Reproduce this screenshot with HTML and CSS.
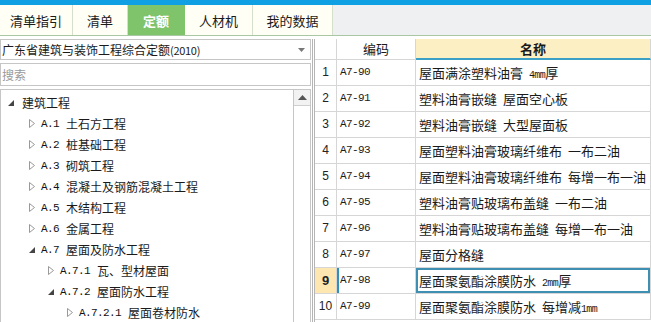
FILE: index.html
```html
<!DOCTYPE html>
<html lang="zh">
<head>
<meta charset="utf-8">
<link rel="stylesheet" href="styles.css">
</head>
<body>
<div class="topbar"></div>
<div class="tabs">
  <div class="tab t1">清单指引</div>
  <div class="tab t2">清单</div>
  <div class="tab t3 active">定额</div>
  <div class="tab t4">人材机</div>
  <div class="tab t5">我的数据</div>
</div>
<div class="main">
  <div class="left">
    <div class="dropdown">
      <span class="dd-text">广东省建筑与装饰工程综合定额<span class="yr">(2010)</span></span>
      <svg class="dd-arrow" width="7" height="4" viewBox="0 0 7 4"><path d="M0 0H7L3.5 4Z" fill="#777"/></svg>
    </div>
    <div class="search">搜索</div>
    <div class="tree">
      <div class="tree-list">
        <div class="node l0"><svg class="ic" width="8" height="8" viewBox="0 0 8 8"><path d="M7 1V7H1Z" fill="#444"/></svg><span class="lbl">建筑工程</span></div>
        <div class="node l1"><svg class="ic" width="8" height="9" viewBox="0 0 8 9"><path d="M1.5 0.5L6.5 4.5L1.5 8.5Z" fill="none" stroke="#999"/></svg><span class="code">A.1</span><span class="lbl">土石方工程</span></div>
        <div class="node l1"><svg class="ic" width="8" height="9" viewBox="0 0 8 9"><path d="M1.5 0.5L6.5 4.5L1.5 8.5Z" fill="none" stroke="#999"/></svg><span class="code">A.2</span><span class="lbl">桩基础工程</span></div>
        <div class="node l1"><svg class="ic" width="8" height="9" viewBox="0 0 8 9"><path d="M1.5 0.5L6.5 4.5L1.5 8.5Z" fill="none" stroke="#999"/></svg><span class="code">A.3</span><span class="lbl">砌筑工程</span></div>
        <div class="node l1"><svg class="ic" width="8" height="9" viewBox="0 0 8 9"><path d="M1.5 0.5L6.5 4.5L1.5 8.5Z" fill="none" stroke="#999"/></svg><span class="code">A.4</span><span class="lbl">混凝土及钢筋混凝土工程</span></div>
        <div class="node l1"><svg class="ic" width="8" height="9" viewBox="0 0 8 9"><path d="M1.5 0.5L6.5 4.5L1.5 8.5Z" fill="none" stroke="#999"/></svg><span class="code">A.5</span><span class="lbl">木结构工程</span></div>
        <div class="node l1"><svg class="ic" width="8" height="9" viewBox="0 0 8 9"><path d="M1.5 0.5L6.5 4.5L1.5 8.5Z" fill="none" stroke="#999"/></svg><span class="code">A.6</span><span class="lbl">金属工程</span></div>
        <div class="node l1"><svg class="ic" width="8" height="8" viewBox="0 0 8 8"><path d="M7 1V7H1Z" fill="#444"/></svg><span class="code">A.7</span><span class="lbl">屋面及防水工程</span></div>
        <div class="node l2"><svg class="ic" width="8" height="9" viewBox="0 0 8 9"><path d="M1.5 0.5L6.5 4.5L1.5 8.5Z" fill="none" stroke="#999"/></svg><span class="code">A.7.1</span><span class="lbl">瓦、型材屋面</span></div>
        <div class="node l2"><svg class="ic" width="8" height="8" viewBox="0 0 8 8"><path d="M7 1V7H1Z" fill="#444"/></svg><span class="code">A.7.2</span><span class="lbl">屋面防水工程</span></div>
        <div class="node l3"><svg class="ic" width="8" height="9" viewBox="0 0 8 9"><path d="M1.5 0.5L6.5 4.5L1.5 8.5Z" fill="none" stroke="#999"/></svg><span class="code">A.7.2.1</span><span class="lbl">屋面卷材防水</span></div>
      </div>
      <div class="vscroll">
        <div class="sb-btn"><svg width="9" height="5" viewBox="0 0 9 5"><path d="M0 5L4.5 0L9 5Z" fill="#555"/></svg></div>
      </div>
    </div>
  </div>
  <div class="right">
    <div class="grid">
      <div class="hd c-no"></div>
      <div class="hd c-code">编码</div>
      <div class="hd c-name">名称</div>

      <div class="c-no">1</div><div class="c-code">A7-90</div><div class="c-name">屋面满涂塑料油膏 <span class="lat">4mm</span>厚</div>
      <div class="c-no">2</div><div class="c-code">A7-91</div><div class="c-name">塑料油膏嵌缝 屋面空心板</div>
      <div class="c-no">3</div><div class="c-code">A7-92</div><div class="c-name">塑料油膏嵌缝 大型屋面板</div>
      <div class="c-no">4</div><div class="c-code">A7-93</div><div class="c-name">屋面塑料油膏玻璃纤维布 一布二油</div>
      <div class="c-no">5</div><div class="c-code">A7-94</div><div class="c-name">屋面塑料油膏玻璃纤维布 每增一布一油</div>
      <div class="c-no">6</div><div class="c-code">A7-95</div><div class="c-name">塑料油膏贴玻璃布盖缝 一布二油</div>
      <div class="c-no">7</div><div class="c-code">A7-96</div><div class="c-name">塑料油膏贴玻璃布盖缝 每增一布一油</div>
      <div class="c-no">8</div><div class="c-code">A7-97</div><div class="c-name">屋面分格缝</div>
      <div class="c-no sel-no">9</div><div class="c-code sel-code">A7-98</div><div class="c-name sel-name">屋面聚氨酯涂膜防水 <span class="lat">2mm</span>厚</div>
      <div class="c-no">10</div><div class="c-code">A7-99</div><div class="c-name">屋面聚氨酯涂膜防水 每增减<span class="lat">1mm</span></div>
    </div>
  </div>
</div>
</body>
</html>
```

FILE: styles.css
```css
* { box-sizing: border-box; }
html, body { margin: 0; padding: 0; }
body {
  width: 651px;
  height: 322px;
  overflow: hidden;
  background: #ffffff;
  font-family: "Noto Sans CJK SC", "Liberation Sans", sans-serif;
  font-size: 12px;
  color: #1a1a1a;
}
.topbar {
  height: 5px;
  background: #0f9fe3;
}
.tabs {
  display: flex;
  height: 31px;
  background: #eff0f2;
  border-bottom: 1px solid #a9c7a2;
}
.tab {
  display: flex;
  align-items: center;
  justify-content: center;
  background: #fffff6;
  border-right: 1px solid #d4e0cc;
  font-size: 13px;
  color: #1a1a1a;
}
.t1 { width: 73px; }
.t2 { width: 55px; }
.t3 { width: 57px; }
.t4 { width: 68px; }
.t5 { width: 80px; }
.tab.active {
  background: #7fc36b;
  color: #ffffff;
  font-weight: bold;
  border-right-color: #7fc36b;
}
.main {
  display: grid;
  grid-template-columns: 311px 1fr;
  column-gap: 1px;
  padding-top: 3px;
}
.left {
  display: flex;
  flex-direction: column;
  gap: 3px;
}
.dropdown {
  height: 21px;
  border: 1px solid #c6c6c6;
  display: flex;
  align-items: center;
  justify-content: space-between;
  padding: 0 5px 0 1px;
  font-size: 12px;
}
.yr { font-size: 11px; letter-spacing: -0.3px; }
.search {
  height: 23px;
  border: 1px solid #c6c6c6;
  display: flex;
  align-items: center;
  padding-left: 1px;
  color: #9a9a9a;
  font-size: 12px;
}
.tree {
  height: 240px;
  border: 1px solid #c6c6c6;
  display: flex;
}
.tree-list {
  flex: 1;
  padding-top: 2px;
}
.node {
  height: 21px;
  display: flex;
  align-items: center;
  white-space: nowrap;
  font-size: 12px;
}
.node .ic { flex: none; margin-right: 5px; }
.l0 { padding-left: 6px; }
.l1 { padding-left: 27px; }
.l2 { padding-left: 46px; }
.l3 { padding-left: 65px; }
.l0 .ic { margin-right: 7px; }
.code {
  font-family: "Liberation Mono", monospace;
  font-size: 11px;
  letter-spacing: -0.6px;
  margin-right: 7px;
  color: #111;
}
.lat {
  font-family: "Liberation Mono", monospace;
  font-size: 10px;
  letter-spacing: -0.6px;
}
.vscroll {
  width: 17px;
  border-left: 1px solid #c6c6c6;
  background: #ffffff;
}
.sb-btn {
  height: 16px;
  background: #f2f2f2;
  border-bottom: 1px solid #cfcfcf;
  display: flex;
  align-items: center;
  justify-content: center;
}
.right {
  border-left: 3px double #b4b4b4;
}
.grid {
  display: grid;
  grid-template-columns: 22px 79px 1fr;
  grid-template-rows: 21px repeat(10, 26px);
}
.grid > div {
  border-right: 1px solid #d6d6d6;
  border-bottom: 1px solid #d6d6d6;
  line-height: 25px;
  white-space: nowrap;
  overflow: hidden;
}
.c-no {
  text-align: center;
  font-family: "Liberation Sans", sans-serif;
  font-size: 12px;
  color: #222;
}
.c-code {
  padding-left: 3px;
  font-family: "Liberation Mono", monospace;
  font-size: 11px;
  letter-spacing: -0.6px;
}
.c-name {
  padding-left: 3px;
  font-size: 13px;
  word-spacing: 3px;
}
.grid > .hd { line-height: 20px; }
.hd.c-code {
  text-align: center;
  font-family: "Noto Sans CJK SC", sans-serif;
  font-size: 13px;
  letter-spacing: 0;
  padding-left: 0;
}
.grid > .hd.c-name {
  text-align: center;
  background: #fdefc4;
  font-weight: bold;
  border-bottom: 2px solid #3aa0c6;
  padding-left: 0;
  line-height: 19px;
}
.grid > .sel-no {
  background: #fde6b0;
  font-weight: bold;
  font-size: 13px;
}
.grid > .sel-code {
  box-shadow: inset 2px 0 0 #2f90b8;
}
.grid > .sel-name {
  box-shadow: inset 0 0 0 2px #3f8fb2;
}
```
